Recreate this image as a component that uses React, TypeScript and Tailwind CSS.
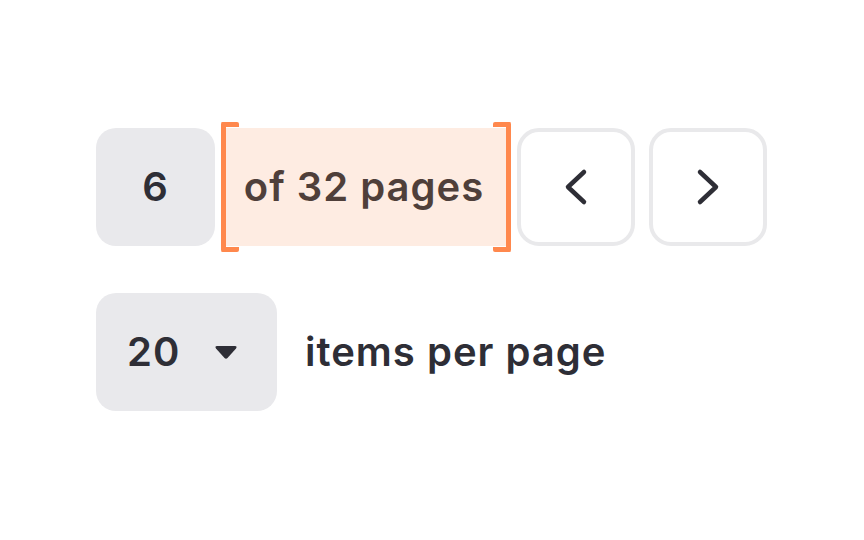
export default function App() {
  return (
    <div className="w-[864px] h-[540px] bg-white font-['Inter','Liberation_Sans',sans-serif] font-semibold text-[#2e2e36] tracking-[1px]">
      <div className="flex flex-col pl-[96px] pt-[128px] gap-[47px]">
        <div className="flex items-center h-[118px]">
          <div className="w-[119px] h-[118px] rounded-[20px] bg-[#e9e9ec] flex items-center justify-center text-[40px]">
            6
          </div>

          <div className="relative ml-[6px] w-[290px] h-[118px] bg-[#feece2] flex items-center justify-center text-[40px] text-[#4f3f3a] pr-[4px]">
            of 32 pages
            <span className="absolute left-0 -top-[6px] -bottom-[6px] w-[18px] border-l-[5px] border-y-[5px] border-[#ff884d] rounded-[2px]" />
            <span className="absolute right-0 -top-[6px] -bottom-[6px] w-[18px] border-r-[5px] border-y-[5px] border-[#ff884d] rounded-[2px]" />
          </div>

          <button className="ml-[6px] w-[118px] h-[118px] rounded-[22px] border-4 border-[#e9e9eb] flex items-center justify-center">
            <svg width="24" height="38" viewBox="0 0 24 38" fill="none">
              <path d="M20 4 L4 19 L20 34" stroke="#2e2e36" strokeWidth="4.5" strokeLinecap="round" strokeLinejoin="round" />
            </svg>
          </button>
          <button className="ml-[14px] w-[118px] h-[118px] rounded-[22px] border-4 border-[#e9e9eb] flex items-center justify-center">
            <svg width="24" height="38" viewBox="0 0 24 38" fill="none">
              <path d="M4 4 L20 19 L4 34" stroke="#2e2e36" strokeWidth="4.5" strokeLinecap="round" strokeLinejoin="round" />
            </svg>
          </button>
        </div>

        <div className="flex items-center gap-[28px]">
          <div className="w-[181px] h-[118px] rounded-[20px] bg-[#e9e9ec] flex items-center pl-[31px] text-[40px]">
            <span>20</span>
            <svg className="ml-[34px]" width="24" height="16" viewBox="0 0 24 16">
              <path d="M3 2 H21 Q23.5 2 22 4.5 L13.5 14 Q12 15.5 10.5 14 L2 4.5 Q0.5 2 3 2 Z" fill="#2e2e36" />
            </svg>
          </div>
          <span className="text-[40px]">items per page</span>
        </div>
      </div>
    </div>
  );
}
